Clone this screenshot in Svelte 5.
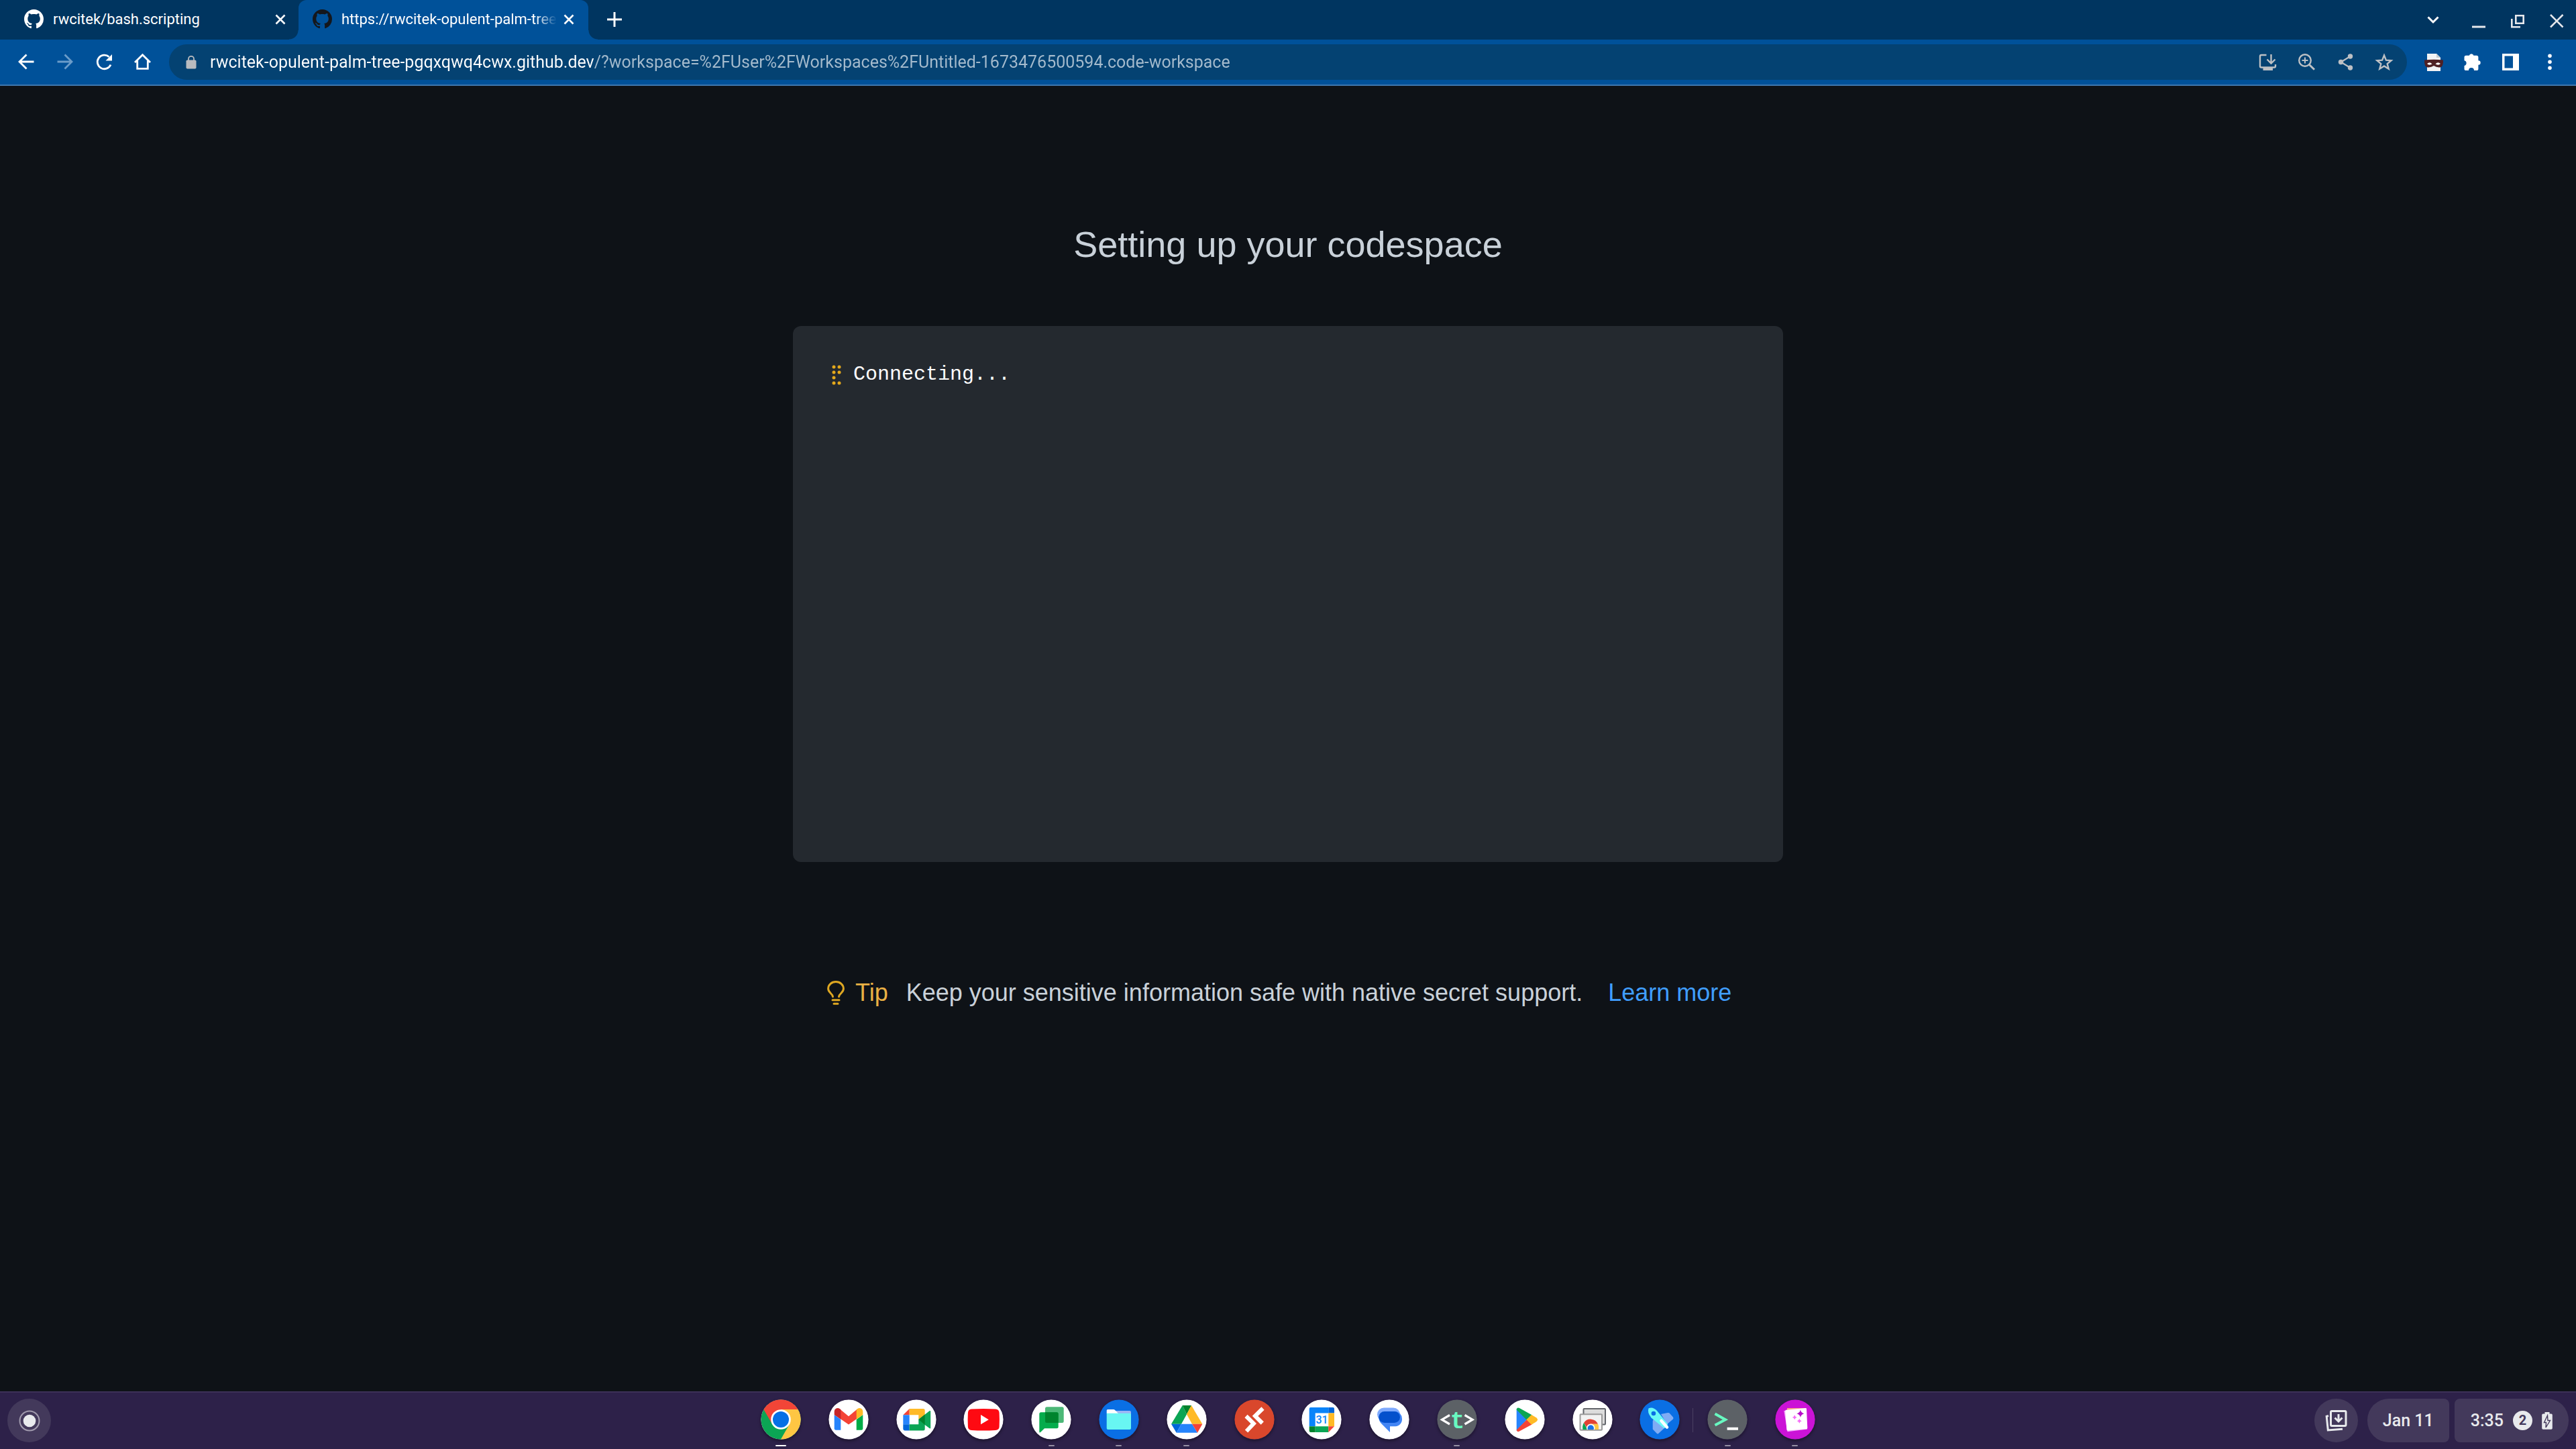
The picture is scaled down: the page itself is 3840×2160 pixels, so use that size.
<script>
  const host = 'rwcitek-opulent-palm-tree-pgqxqwq4cwx.github.dev';
  let address = $state(host + '/?workspace=%2FUser%2FWorkspaces%2FUntitled-1673476500594.code-workspace');

  const apps = [
    { id: 'chrome', label: 'Chrome', state: 'active' },
    { id: 'gmail', label: 'Gmail' },
    { id: 'meet', label: 'Meet' },
    { id: 'youtube', label: 'YouTube' },
    { id: 'chat', label: 'Chat', state: 'open' },
    { id: 'files', label: 'Files', state: 'open' },
    { id: 'drive', label: 'Drive', state: 'open' },
    { id: 'remote', label: 'Remote Desktop' },
    { id: 'calendar', label: 'Calendar' },
    { id: 'messages', label: 'Messages' },
    { id: 'text', label: 'Text', state: 'open' },
    { id: 'play', label: 'Play Store' },
    { id: 'crd', label: 'Chrome Remote Desktop' },
    { id: 'explore', label: 'Explore', last: true },
    { id: 'terminal', label: 'Terminal', state: 'open' },
    { id: 'gallery', label: 'Gallery', state: 'open' }
  ];

  const dark = { text: '#5c6166', terminal: '#5c6166', files: '#0a6fe4', explore: '#0a6fe4', remote: '#d9472c', gallery: '#cb13d6' };
</script>

{#snippet github()}
  <svg class="favicon" viewBox="0 0 16 16" fill="currentColor" aria-hidden="true">
    <path d="M8 0C3.58 0 0 3.58 0 8c0 3.54 2.29 6.53 5.47 7.59.4.07.55-.17.55-.38 0-.19-.01-.82-.01-1.49-2.01.37-2.53-.49-2.69-.94-.09-.23-.48-.94-.82-1.13-.28-.15-.68-.52-.01-.53.63-.01 1.08.58 1.23.82.72 1.21 1.87.87 2.33.66.07-.52.28-.87.51-1.07-1.78-.2-3.64-.89-3.64-3.95 0-.87.31-1.59.82-2.15-.08-.2-.36-1.02.08-2.12 0 0 .67-.21 2.2.82.64-.18 1.32-.27 2-.27s1.36.09 2 .27c1.53-1.04 2.2-.82 2.2-.82.44 1.1.16 1.92.08 2.12.51.56.82 1.27.82 2.15 0 3.07-1.87 3.75-3.65 3.95.29.25.54.73.54 1.48 0 1.07-.01 1.93-.01 2.2 0 .21.15.46.55.38A8.01 8.01 0 0 0 16 8c0-4.42-3.58-8-8-8z" />
  </svg>
{/snippet}

{#snippet cross()}
  <svg class="cross" viewBox="0 0 16 16" stroke="currentColor" stroke-width="2.6" aria-hidden="true"><path d="M1.5 1.5l13 13M14.500 1.500l-13 13" /></svg>
{/snippet}

{#snippet appIcon(id)}
  <svg class="app-icon" viewBox="0 0 60 60" aria-hidden="true">
    <circle cx="30" cy="30" r="29.600" fill={dark[id] ?? '#fff'} />
    {#if id === 'chrome'}
      <circle cx="30" cy="30" r="29.600" fill="#0ba554" />
      <path fill="#f24537" d="M4.400 15A29.600 29.600 0 0 1 55.600 15H30V30L17.300 37.300z" />
      <path fill="#fec643" d="M55.600 15A29.600 29.600 0 0 1 30 59.600L42.700 37.300 30 30V15z" />
      <circle cx="30" cy="30" r="14.800" fill="#fff" />
      <circle cx="30" cy="30" r="12" fill="#0570e5" />
    {:else if id === 'gmail'}
      <path fill="#2684fc" d="M8.700 23L18.300 30V45.700H11a2.300 2.300 0 0 1-2.300-2.300z" />
      <path fill="#00ac47" d="M51.300 23L41.700 30V45.700H49a2.300 2.300 0 0 0 2.300-2.300z" />
      <path fill="#f44336" d="M17 14.500L30 25.200 43 14.500V28.500L30 37.500 17 28.500z" />
      <path fill="#c52528" d="M8.700 18a5 5 0 0 1 8-4l1.600 1.300V29.700L8.700 23z" />
      <path fill="#ffba26" d="M51.300 18a5 5 0 0 0-8-4l-1.600 1.300V29.700L51.300 23z" />
    {:else if id === 'meet'}
      <path fill="#f44336" d="M10.300 23.300L19.700 14v9.300z" />
      <path fill="#ffba26" d="M19.700 14H40.200a2.500 2.500 0 0 1 2.500 2.500V23L33.300 30V23.300H19.700z" />
      <path fill="#2684fc" d="M10.300 23.300h9.400v14h-9.400z" />
      <path fill="#0066da" d="M10.300 37.300h9.400v9.100h-7a2.400 2.400 0 0 1-2.400-2.400z" />
      <path fill="#0ba554" d="M19.700 37.300H33.300V30L49.500 17.300q1.700-1 1.700.7V42.500q0 1.700-1.700.6L42.700 38v5.900a2.500 2.500 0 0 1-2.500 2.500H19.700z" />
      <path fill="#00832d" d="M33.300 30L42.700 22.500V38z" />
    {:else if id === 'youtube'}
      <path fill="#fe0a12" d="M12 14.600Q30 13.400 48 14.600 53.300 15 53.600 20 54.200 30 53.600 41 53.300 45.600 48 46 30 47.200 12 46 7.200 45.600 6.900 41 6.300 30 6.900 20 7.200 15 12 14.600z" />
      <path fill="#fff" d="M26 23l11.800 7.300L26 37.300z" />
    {:else if id === 'chat'}
      <rect x="21" y="11.300" width="27.700" height="23.700" rx="2.500" fill="#4cb877" />
      <path fill="#05ac4c" d="M14.800 19.300H38.200a2.500 2.500 0 0 1 2.500 2.500V40.800a2.500 2.500 0 0 1-2.500 2.500H20L14 49q-1.700 1.200-1.700-.8V21.800a2.500 2.500 0 0 1 2.500-2.500z" />
      <path fill="#00832d" d="M21 19.300H38.200a2.500 2.500 0 0 1 2.500 2.500V35H23.500A2.500 2.500 0 0 1 21 32.500z" />
    {:else if id === 'files'}
      <path fill="#9db6f5" d="M22 17H46a2 2 0 0 1 2 2v4H22z" />
      <path fill="#fff" d="M13.300 15H22q1 0 1.800.8L29 21H11.700V16.600A1.600 1.600 0 0 1 13.300 15z" />
      <path fill="#68f6f2" d="M11.700 20.700H46a2 2 0 0 1 2 2V43a2 2 0 0 1-2 2H13.700a2 2 0 0 1-2-2z" />
    {:else if id === 'drive'}
      <path fill="#0ba554" d="M23.700 9L30 22.300 22 36.700H7z" />
      <path fill="#00832d" d="M23.700 9H37L30 22.300z" />
      <path fill="#ffba26" d="M37 9L53.300 36.700H38L30 22.300z" />
      <path fill="#0066da" d="M7 36.700H22L14.700 49.700z" />
      <path fill="#2684fc" d="M22 36.700H38L46 49.700H14.700z" />
      <path fill="#f44336" d="M38 36.700H53.300L46 49.700z" />
    {:else if id === 'remote'}
      <g fill="none" stroke="#fff" stroke-width="6"><path d="M17.500 25L28.800 36 18 47.500" /><path d="M42.500 13.500L31 24.800 41.800 35.500" /></g>
    {:else if id === 'calendar'}
      <path fill="#0984fa" d="M13.700 12H40.300V20.500H20.700V40H11.700V14a2 2 0 0 1 2-2z" />
      <path fill="#0066da" d="M40.300 12H47a2 2 0 0 1 2 2v6.500H40.300z" />
      <path fill="#ffba26" d="M40.300 20.500H49V40.300H40.300z" />
      <path fill="#0ba554" d="M20.700 40.300H40.300V49H20.700z" />
      <path fill="#00832d" d="M11.700 40.300h9V49h-7a2 2 0 0 1-2-2z" />
      <path fill="#f44336" d="M40.300 40.300H49L40.300 49z" />
      <text x="30.500" y="36" class="cal-day">31</text>
    {:else if id === 'messages'}
      <rect x="12" y="12.500" width="34" height="20" rx="10" fill="#7faafd" />
      <path fill="#4285f4" d="M24 18H39A10.500 10.500 0 0 1 49 29 10.500 10.500 0 0 1 39 40.300H31V49L18 36Q14.300 32 14.300 26z" />
      <rect x="14.300" y="18" width="31.700" height="17" rx="8.500" fill="#0450cc" />
    {:else if id === 'text'}
      <g fill="none" stroke="#fff" stroke-width="3.200"><path d="M19 23.500L7.500 30.200 19 37" /><path d="M41.500 23.500L53 30.200 41.500 37" /></g>
      <text x="30.500" y="43" class="text-t">t</text>
    {:else if id === 'play'}
      <path fill="#2684fc" d="M17.700 14L33 30.300 17.700 47z" />
      <path fill="#0ba554" d="M17.700 15.500Q18 11.500 22 13L40.500 23.300 33 31z" />
      <path fill="#f44336" d="M17.700 45.500Q18.500 49.500 22 47.500L40.500 37.500 33 30.300z" />
      <path fill="#ffba26" d="M40 23L47.500 27.500Q50.500 30.300 47.500 33L40 37.800 32.400 30.300z" />
    {:else if id === 'crd'}
      <rect x="16.500" y="14" width="32.500" height="23.500" rx="1" fill="#dcdcdc" stroke="#62656a" stroke-width="2" />
      <rect x="11.500" y="22.300" width="32.500" height="23.500" rx="1" fill="#f2f2f2" stroke="#9a9a9a" stroke-width="2" />
      <path fill="#e34133" d="M17 35A12 12 0 0 1 38 36.800H27L22 43z" />
      <path fill="#0ba554" d="M17 35L22.500 45H15.400Q14.500 39 17 35z" />
      <path fill="#fec643" d="M27 36.800H38.200Q39.600 40 39 45H31z" />
      <path fill="#fff" d="M21.500 45A6.200 6.200 0 1 1 33 45z" />
      <path fill="#1a73e8" d="M23 45A4.700 4.700 0 1 1 31.500 45z" />
    {:else if id === 'explore'}
      <path fill="#80acf4" d="M32 22L42 20q2-.5 3 1l5 5.500q1 1.500 0 3L41 37zM21 30Q19.700 31 19.700 33V44.500L26 51q1.500 1 2.700-.5L38 42z" />
      <path fill="#68f9f6" d="M13.600 13.300Q20 10.500 26 17L42 36.500Q41.500 42 36.500 43L17.500 27.500Q11 19 13.600 13.300z" />
      <circle cx="20.900" cy="21" r="3.300" fill="#0a6fe4" />
      <path d="M32.500 32L41 41.500" stroke="#fff" stroke-width="4.500" stroke-linecap="round" />
    {:else if id === 'terminal'}
      <path d="M11.500 21.500L27 30.200 11.500 38.500" fill="none" stroke="#68f8c0" stroke-width="4" />
      <path fill="#fff" d="M29.600 41.700H46v4H29.600z" />
    {:else if id === 'gallery'}
      <path fill="#f9a58b" d="M18 13H45a2 2 0 0 1 2 2v10H18z" />
      <path fill="#f3a6fa" d="M13.300 17L40 15 48.200 44.500 18.500 48.200z" />
      <path fill="#fff" d="M16.500 15.800L45.500 13.100Q47 13.100 47 14.500L48.300 42.500Q48.300 44 46.800 44.200L19 46.500Q17.500 46.500 17.400 45L15.200 17.500Q15.200 16 16.500 15.800z" />
      <path fill="#b80fc9" d="M37.900 15.500Q38.900 20.300 43.500 21.300 38.900 22.300 37.900 27 36.900 22.300 32.300 21.300 36.900 20.300 37.900 15.500z" />
      <path fill="#f56cf7" d="M29.200 23.200Q29.900 26 32.700 26.700 29.900 27.400 29.200 30.200 28.500 27.400 25.700 26.700 28.500 26 29.200 23.200zM36.300 28.800Q37 31.600 39.800 32.300 37 33 36.300 35.800 35.600 33 32.800 32.300 35.600 31.600 36.300 28.800z" />
    {/if}
  </svg>
{/snippet}

<div class="screen">
  <header>
    <div class="tabs">
      <div class="tab">
        {@render github()}
        <span class="tab-title">rwcitek/bash.scripting</span>
        <button class="tab-close" aria-label="Close tab">{@render cross()}</button>
      </div>
      <div class="tab current">
        {@render github()}
        <span class="tab-title">https://rwcitek-opulent-palm-tree</span>
        <button class="tab-close" aria-label="Close tab">{@render cross()}</button>
      </div>
      <button class="new-tab" aria-label="New tab">
        <svg viewBox="0 0 22 22" width="22" height="22" stroke="#fff" stroke-width="3"><path d="M11 0v22M0 11h22" /></svg>
      </button>
      <div class="window-controls">
        <button class="search-tabs" aria-label="Search tabs"><svg viewBox="0 0 36 36" fill="none" stroke="#fff" stroke-width="3"><path d="M10.500 12.500l7.500 7.500 7.500-7.500" /></svg></button>
        <button aria-label="Minimize"><svg viewBox="0 0 36 36" fill="#e6e8ec"><path d="M8 25.500h20v3H8z" /></svg></button>
        <button aria-label="Restore"><svg viewBox="0 0 36 36" fill="none" stroke="#e6e8ec" stroke-width="2.600"><path d="M15.300 10.300h11.400v11.400H15.300zM9.300 15v12.200H22" /></svg></button>
        <button aria-label="Close"><svg viewBox="0 0 36 36" fill="none" stroke="#e6e8ec" stroke-width="2.600"><path d="M9 9l18.500 18.500M27.500 9L9 27.500" /></svg></button>
      </div>
    </div>

    <div class="toolbar">
      <nav class="icon-row" aria-label="Navigation">
        <button aria-label="Back"><svg viewBox="0 0 36 36" fill="none" stroke="#fff" stroke-width="2.800"><path d="M29.500 17H8M18.500 6.500L8 17l10.500 10.500" /></svg></button>
        <button aria-label="Forward" disabled><svg viewBox="0 0 36 36" fill="none" stroke="#6b9cc9" stroke-width="2.800"><path d="M6.500 17H28M17.500 6.500L28 17 17.500 27.500" /></svg></button>
        <button aria-label="Reload"><svg viewBox="0 0 36 36" fill="none" stroke="#fff" stroke-width="2.800"><path d="M28 21.500A10.300 10.300 0 1 1 25.500 9.800" /><path d="M30 6v9.500H20.500z" fill="#fff" stroke="none" /></svg></button>
        <button aria-label="Home"><svg viewBox="0 0 36 36" fill="none" stroke="#fff" stroke-width="2.800"><path d="M6 18L17.500 6.700 29 18M9.700 15.500V27.300H25.300V15.500" /></svg></button>
      </nav>
      <div class="omnibox">
        <svg class="lock" viewBox="0 0 16 20" aria-hidden="true"><rect x=".5" y="6.500" width="15" height="13" rx="1.800" fill="#b9bbbf" /><path d="M4 8V4.800a4 4 0 0 1 8 0V8" fill="none" stroke="#b9bbbf" stroke-width="1.800" /></svg>
        <input aria-label="Address" bind:value={address} spellcheck="false" />
        <div class="icon-row">
          <button aria-label="Install"><svg viewBox="0 0 36 36" fill="none" stroke="#bdc0c4" stroke-width="2.400"><path d="M16.500 7H9a2 2 0 0 0-2 2v14.500a2 2 0 0 0 2 2H28a2 2 0 0 0 2-2V21M23.500 6v12.500M17.500 13.500l6 6 6-6" /><path d="M11.500 25.500h14.500V30H11.500z" fill="#bdc0c4" stroke="none" /></svg></button>
          <button aria-label="Zoom"><svg viewBox="0 0 36 36" fill="none" stroke="#bdc0c4" stroke-width="2.400"><circle cx="16" cy="15" r="8.800" /><path d="M16 10.500v9M11.500 15h9" stroke-width="2" /><path d="M22.500 21.500l7.500 7.300" stroke-width="3" /></svg></button>
          <button aria-label="Share"><svg viewBox="0 0 36 36" fill="#bdc0c4"><path d="M25.500 9L11.500 17.500 25.500 26" fill="none" stroke="#bdc0c4" stroke-width="2.200" /><circle cx="25.500" cy="9" r="3.700" /><circle cx="11.500" cy="17.500" r="3.700" /><circle cx="25.500" cy="26" r="3.700" /></svg></button>
          <button aria-label="Bookmark"><svg viewBox="0 0 36 36" fill="none" stroke="#bdc0c4" stroke-width="2.400"><path d="M18 7.500l2.900 7.200 7.700.5-5.900 5 2 7.500L18 23.500l-6.700 4.200 2-7.500-5.900-5 7.700-.5z" /></svg></button>
        </div>
      </div>
      <div class="icon-row">
        <button aria-label="Extension"><svg viewBox="0 0 36 36"><path d="M8 5H22l6 6V31H8z" fill="#f2f3f5" /><path d="M22 5l6 6h-6z" fill="#c9ccd0" /><path d="M4 14.500Q18 13 32 14.500 32.500 26 26 25.500 21.500 25.300 18 23 14.500 25.300 10 25.500 3.500 26 4 14.500z" fill="#4e2024" /><path d="M8 20q4-3.500 7.500.5Q11 23 8 20zM28 20q-4-3.500-7.500.5Q25 23 28 20z" fill="#fff" /></svg></button>
        <button aria-label="Extensions"><svg viewBox="0 0 36 36" fill="#fff"><path d="M12.800 7.800a3.400 3.400 0 0 1 6.600 0h4.400a2.600 2.600 0 0 1 2.600 2.600v4.800a3.300 3.300 0 0 1 0 6.600v5.600a2.600 2.600 0 0 1-2.600 2.600h-3.800a4 4 0 0 0-8 0H8.100a2.600 2.600 0 0 1-2.600-2.600V23a4 4 0 0 0 0-7.800v-4.800a2.600 2.600 0 0 1 2.600-2.600z" /></svg></button>
        <button aria-label="Side panel"><svg viewBox="0 0 36 36"><path d="M4 5h25v25H4z" fill="#fff" /><path d="M7.500 8.500H20v18H7.500z" fill="#005199" /></svg></button>
        <button aria-label="Menu"><svg viewBox="0 0 36 36" fill="#fff"><circle cx="17" cy="8.300" r="2.800" /><circle cx="17" cy="17.300" r="2.800" /><circle cx="17" cy="26.300" r="2.800" /></svg></button>
      </div>
    </div>
  </header>

  <main>
    <h1>Setting up your codespace</h1>
    <section class="log">
      <svg class="spinner" viewBox="0 0 14 30" fill="#e3a81c" aria-hidden="true">
        <circle cx="3" cy="3" r="2.500" /><circle cx="11" cy="3" r="2.500" />
        <circle cx="3" cy="11" r="2.500" /><circle cx="11" cy="11" r="2.500" />
        <circle cx="3" cy="19" r="2.500" />
        <circle cx="3" cy="27" r="2.500" /><circle cx="11" cy="27" r="2.500" />
      </svg>
      <span>Connecting...</span>
    </section>
    <p class="tip">
      <svg class="bulb" viewBox="0 0 26 36" fill="none" stroke="#dea722" stroke-width="3" stroke-linecap="round" aria-hidden="true">
        <path d="M8.500 23.800C7.800 18.500 1.600 18 1.600 11.800 1.600 6 6.500 1.600 13 1.600S24.400 6 24.400 11.800C24.400 18 18.200 18.500 17.500 23.800M8 28.800h10M10 34.300h6" />
      </svg>
      <strong>Tip</strong>
      <span>Keep your sensitive information safe with native secret support.</span>
      <a href="#learn-more">Learn more</a>
    </p>
  </main>

  <footer>
    <div class="launcher">
      <button class="round" aria-label="Launcher">
        <svg viewBox="0 0 32 32" width="32" height="32"><circle cx="16" cy="16" r="14.500" fill="none" stroke="#a19bae" stroke-width="2" /><circle cx="16" cy="16" r="9.300" fill="#e8eaed" /></svg>
      </button>
    </div>
    <div class="apps">
      {#each apps as app}
        <button class={['app', app.state, app.last && 'last']} aria-label={app.label}>{@render appIcon(app.id)}</button>
      {/each}
    </div>
    <div class="status">
      <button class="round holding" aria-label="Holding space">
        <svg viewBox="0 0 36 36" width="36" height="36" fill="none" stroke="#e8eaed" stroke-width="3">
          <rect x="10.500" y="3.500" width="22.500" height="22" rx="1.500" />
          <path d="M22 8v10M16.500 13.500l5.500 5.500 5.500-5.500" />
          <path d="M7 10.500l-2.800.8L6.300 32 28 30.200" />
        </svg>
      </button>
      <button class="pill date">Jan 11</button>
      <button class="pill time">
        <span>3:35</span>
        <span class="badge">2</span>
        <svg viewBox="0 0 16 26" width="16" height="26" aria-hidden="true"><path d="M4.500 0h7v2.500H14a1.800 1.800 0 0 1 1.800 1.800V24a1.800 1.800 0 0 1-1.800 1.800H2A1.800 1.800 0 0 1 .2 24V4.300A1.800 1.800 0 0 1 2 2.500H4.500z" fill="#e8eaed" /><path d="M8.500 5L3.500 15.500h3L6 23l6.500-10.500H9z" fill="none" stroke="#43395b" stroke-width="1.400" /></svg>
      </button>
    </div>
  </footer>
</div>

<style>
  :global(body) {
    margin: 0;
    background: #0e1217;
  }
  .screen {
    min-height: 100vh;
    display: flex;
    flex-direction: column;
    font-family: Roboto, sans-serif;
    color: #fff;
  }
  button {
    padding: 0;
    border: 0;
    background: none;
    color: inherit;
    font: inherit;
    display: flex;
    align-items: center;
    justify-content: center;
  }
  svg {
    flex: none;
    display: block;
  }

  .tabs {
    height: 59px;
    display: flex;
    background: #003560;
  }
  .tab {
    box-sizing: border-box;
    width: 445px;
    padding: 0 19px 2px 36px;
    display: flex;
    align-items: center;
    font-size: 22px;
  }
  .tab.current {
    position: relative;
    width: 432px;
    padding: 0 21px 2px 21px;
    background: #005199;
    border-radius: 12px 12px 0 0;
  }
  .tab.current::before,
  .tab.current::after {
    content: '';
    position: absolute;
    bottom: 0;
    width: 14px;
    height: 14px;
  }
  .tab.current::before {
    right: 100%;
    background: radial-gradient(circle at 0 0, transparent 13px, #005199 14px);
  }
  .tab.current::after {
    left: 100%;
    background: radial-gradient(circle at 100% 0, transparent 13px, #005199 14px);
  }
  .favicon {
    width: 29px;
    height: 29px;
  }
  .tab.current .favicon {
    color: #14171c;
  }
  .tab-title {
    flex: 1;
    min-width: 0;
    margin: 0 10px 0 14px;
    white-space: nowrap;
  }
  .tab.current .tab-title {
    mask-image: linear-gradient(to left, transparent, #000 32px);
  }
  .cross {
    width: 16px;
    height: 16px;
  }
  .new-tab {
    width: 78px;
    padding-bottom: 2px;
  }
  .window-controls {
    margin-left: auto;
    display: flex;
  }
  .window-controls button,
  .icon-row button {
    width: 58px;
  }
  .window-controls button {
    padding-top: 3px;
  }
  .window-controls .search-tabs {
    margin-right: 10px;
  }
  .window-controls svg,
  .icon-row svg {
    width: 36px;
    height: 36px;
  }

  .toolbar {
    padding: 7px 9px 7px 10px;
    display: flex;
    background: #005199;
    border-bottom: 2px solid #3f77ae;
  }
  .icon-row {
    display: flex;
  }
  .omnibox {
    flex: 1;
    height: 53px;
    margin: 0 11px 0 10px;
    padding: 0 5px 0 25px;
    box-sizing: border-box;
    display: flex;
    align-items: center;
    gap: 20px;
    background: #044272;
    border-radius: 27px;
  }
  .lock {
    width: 16px;
    height: 20px;
  }
  input {
    flex: 1;
    min-width: 0;
    height: 40px;
    padding: 0;
    border: 0;
    outline: 0;
    font: 25px Roboto, sans-serif;
    color: transparent;
    background: linear-gradient(to right, #fff 572px, #a5bbcd 572px);
    -webkit-background-clip: text;
    background-clip: text;
  }

  main {
    flex: 1;
    display: flex;
    flex-direction: column;
    align-items: center;
    padding: 202px 24px 0;
    font-family: 'Liberation Sans', Arial, sans-serif;
    color: #c9d1d9;
  }
  h1 {
    margin: 0;
    font-size: 54px;
    line-height: 68px;
    font-weight: 400;
  }
  .log,
  .tip {
    box-sizing: border-box;
    width: 100%;
    max-width: 1476px;
  }
  .log {
    min-height: 799px;
    margin-top: 88px;
    padding: 54px 58px;
    display: flex;
    align-items: flex-start;
    gap: 18px;
    background: #24292f;
    border-radius: 12px;
    color: #fff;
    font: 30px/36px 'Liberation Mono', monospace;
  }
  .spinner {
    width: 14px;
    height: 30px;
    margin-top: 4px;
  }
  .tip {
    margin: 172px 0 0;
    padding-left: 51px;
    display: flex;
    align-items: center;
    font-size: 36px;
    line-height: 46px;
  }
  .bulb {
    width: 26px;
    height: 36px;
  }
  .tip strong {
    margin: 0 27px 0 16px;
    font-weight: 400;
    color: #e9b044;
  }
  .tip a {
    margin-left: 38px;
    color: #409eff;
    text-decoration: none;
  }

  footer {
    box-sizing: border-box;
    height: 86px;
    display: grid;
    grid-template-columns: 1fr auto 1fr;
    background: #2d2149;
    border-top: 2px solid #3c3058;
    color: #e8eaed;
    font-size: 25px;
    font-weight: 500;
  }
  .launcher {
    padding: 9px 11px;
  }
  .round {
    width: 65px;
    height: 65px;
    border-radius: 50%;
    background: #43395b;
  }
  .apps {
    width: 1572px;
    display: flex;
    justify-content: space-between;
  }
  .app {
    position: relative;
    width: 60px;
    align-items: flex-start;
    padding-top: 10px;
  }
  .app-icon {
    width: 60px;
    height: 60px;
    border-radius: 50%;
    box-shadow: 0 2px 4px #0006;
  }
  .app::after {
    position: absolute;
    bottom: 4px;
    width: 9px;
    height: 2px;
    border-radius: 1px;
    background: #958ea3;
  }
  .app.active::after,
  .app.open::after {
    content: '';
  }
  .app.active::after {
    width: 16px;
    background: #fff;
  }
  .app.last::before {
    content: '';
    position: absolute;
    left: 79px;
    top: 23px;
    width: 1px;
    height: 36px;
    background: #4a4062;
  }
  .status {
    display: flex;
    justify-content: flex-end;
    padding: 9px 11px 0 0;
  }
  .holding {
    margin-right: 14px;
  }
  .pill {
    height: 65px;
    background: #43395b;
  }
  .date {
    width: 122px;
    margin-right: 8px;
    border-radius: 32px 8px 8px 32px;
  }
  .time {
    padding: 0 24px;
    gap: 14px;
    border-radius: 8px 32px 32px 8px;
  }
  .badge {
    width: 29px;
    border-radius: 50%;
    background: #e8eaed;
    color: #43395b;
    font-size: 20px;
    line-height: 29px;
    font-weight: 700;
    text-align: center;
  }
  .cal-day {
    font: 500 16px Roboto, sans-serif;
    fill: #0984fa;
    text-anchor: middle;
  }
  .text-t {
    font: 700 36px 'Liberation Mono', monospace;
    fill: #68f8c0;
    text-anchor: middle;
  }
</style>
